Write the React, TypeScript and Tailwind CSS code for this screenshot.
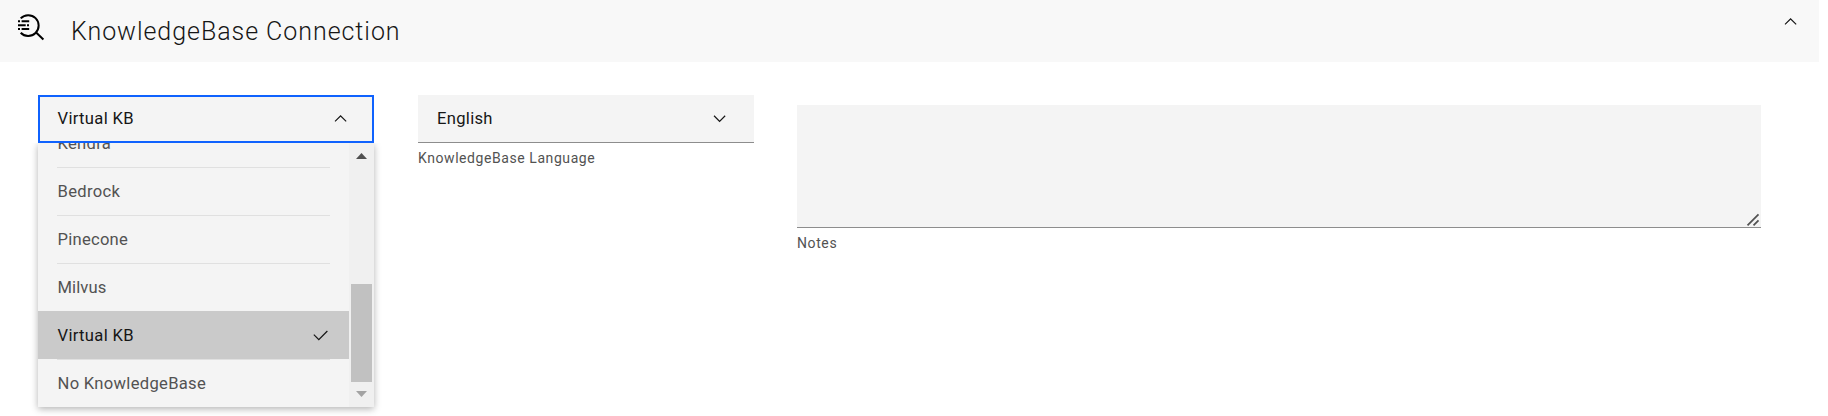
import { useState } from "react";

const OPTIONS = ["Kendra", "Bedrock", "Pinecone", "Milvus", "Virtual KB", "No KnowledgeBase"];

const TRACKING: Record<string, string> = {
  Kendra: "tracking-[0.3px]",
  Bedrock: "tracking-[0.3px]",
  Pinecone: "tracking-[0.25px]",
  Milvus: "tracking-[0.1px]",
  "Virtual KB": "tracking-[0.32px]",
  "No KnowledgeBase": "tracking-[0.3px]",
};

function Chevron({ up = false }: { up?: boolean }) {
  return (
    <svg width="19.2" height="19.2" viewBox="0 0 16 16" className={up ? "rotate-180" : ""} fill="#161616">
      <path d="M8 11 3 6l.7-.7L8 9.6l4.3-4.3.7.7z" />
    </svg>
  );
}

function DiscoveryIcon() {
  return (
    <svg width="30" height="30" viewBox="15 12 30 30" fill="none" stroke="#000" strokeWidth="2">
      <path d="M20.7 18.4A10.4 10.4 0 1 1 20.7 32.7" />
      <path d="M35.6 32 43.4 39.5" />
      <path d="M18 21.2h2M21.6 21.2h7.6M18 25.2h7.7M27 25.2h2M18 29.1h2M21.6 29.1h7.6" />
    </svg>
  );
}

function Option({ label, selected }: { label: string; selected: boolean }) {
  return (
    <li
      className={
        selected
          ? "h-12 shrink-0 bg-[#cacaca] px-[19px] text-[#161616]"
          : "h-12 shrink-0 px-[19px] text-[#525252]"
      }
    >
      <div
        className={
          "flex h-12 items-center justify-between border-t " +
          (selected ? "border-[#cacaca]" : "border-[#e0e0e0]")
        }
      >
        <span className={"pt-px pl-[0.5px] whitespace-nowrap " + TRACKING[label]}>{label}</span>
        {selected && (
          <svg width="19.2" height="19.2" viewBox="0 0 32 32" fill="#161616">
            <path d="M13 24 4 15l1.41-1.41L13 21.17 26.59 7.58 28 9z" />
          </svg>
        )}
      </div>
    </li>
  );
}

export default function App() {
  const [selected] = useState("Virtual KB");

  return (
    <div className="h-[416px] w-[1828px] overflow-hidden bg-white font-['Roboto','Liberation_Sans',sans-serif] text-[16.6px] text-[#161616]">
      <header className="flex h-[62px] w-[1819px] items-start bg-[#f8f8f8] pl-[15px]">
        <div className="pt-3">
          <DiscoveryIcon />
        </div>
        <h1 className="ml-[26px] pt-[14px] text-[25px] leading-9 font-light tracking-[0.95px] whitespace-nowrap">
          KnowledgeBase Connection
        </h1>
        <div className="mt-3 mr-[19px] ml-auto">
          <Chevron up />
        </div>
      </header>

      <main className="flex items-start pt-[33px] pl-[38px]">
        <section className="w-[336px]">
          <button className="flex h-12 w-full items-center justify-between border-2 border-[#0f62fe] bg-[#f4f4f4] pr-[22px] pb-px pl-[17.5px]">
            <span className="pt-[2px] tracking-[0.32px]">{selected}</span>
            <Chevron up />
          </button>
          <div className="flex h-[264px] bg-[#f4f4f4] shadow-[0_2px_7px_rgba(0,0,0,0.3)] [clip-path:inset(0_-12px_-12px_-12px)]">
            <ul className="flex h-full w-[311px] flex-col justify-end overflow-hidden">
              {OPTIONS.map((label) => (
                <Option key={label} label={label} selected={label === selected} />
              ))}
            </ul>
            <div className="flex w-[25px] flex-col items-center bg-[#f0f0f0]">
              <svg width="11" height="6" viewBox="0 0 11 6" className="mt-[10px]" fill="#505050">
                <path d="M0 6 5.5 0 11 6z" />
              </svg>
              <div className="mt-auto h-[98px] w-[21px] bg-[#c1c1c1]" />
              <svg width="11" height="6" viewBox="0 0 11 6" className="mt-[9px] mb-[10px]" fill="#a3a3a3">
                <path d="M0 0h11L5.5 6z" />
              </svg>
            </div>
          </div>
        </section>

        <section className="ml-[44px] w-[336px]">
          <button className="flex h-12 w-full items-center justify-between border-b border-[#8d8d8d] bg-[#f4f4f4] pr-[25px] pl-[19px]">
            <span className="pt-px tracking-[0.3px]">English</span>
            <Chevron />
          </button>
          <p className="mt-[5px] text-[14px] leading-5 tracking-[0.57px] whitespace-nowrap text-[#525252]">
            KnowledgeBase Language
          </p>
        </section>

        <section className="mt-[10px] ml-[43px] w-[964px]">
          <div className="flex h-[123px] items-end justify-end border-b border-[#8d8d8d] bg-[#f4f4f4]">
            <svg width="16" height="14" viewBox="0 0 16 14" fill="none" stroke="#525252" strokeWidth="1.7">
              <path d="M2.5 12.3 13.5 1.3M8.5 12.3 13.5 7.3" />
            </svg>
          </div>
          <p className="mt-[5px] text-[14px] leading-5 tracking-[0.6px] text-[#525252]">Notes</p>
        </section>
      </main>
    </div>
  );
}
